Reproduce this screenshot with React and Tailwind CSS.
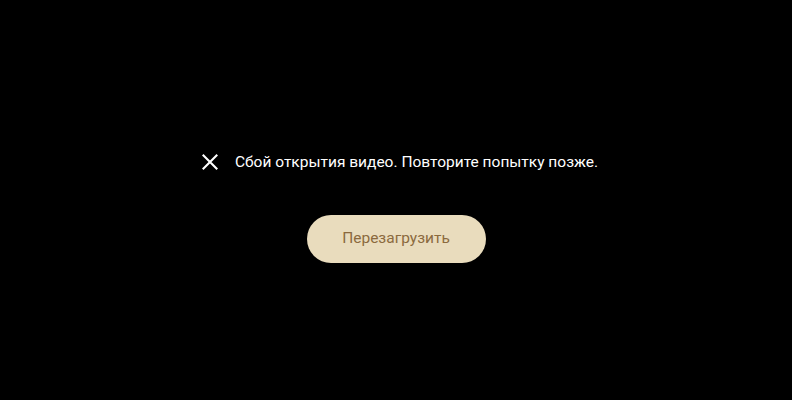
import React from "react";

const App = () => {
  return (
    <div className="w-full h-[400px] bg-black flex flex-col items-center pt-[150px] font-['Roboto',sans-serif]">
      <div className="flex items-center gap-[17px] h-6 pl-[8px]">
        <svg className="w-[16px] h-[16px] text-white" viewBox="0 0 16 16" fill="none" stroke="currentColor" strokeWidth="2.1" strokeLinecap="square">
          <path d="M1.5 1.5l13 13M14.5 1.5l-13 13" />
        </svg>
        <p className="text-white text-[15.5px] leading-6">Сбой открытия видео. Повторите попытку позже.</p>
      </div>
      <button className="mt-[41px] w-[179px] h-[48px] rounded-full bg-[#e9dcbd] text-[#8b6a3e] text-[15.5px]">
        Перезагрузить
      </button>
    </div>
  );
};

export default App;
